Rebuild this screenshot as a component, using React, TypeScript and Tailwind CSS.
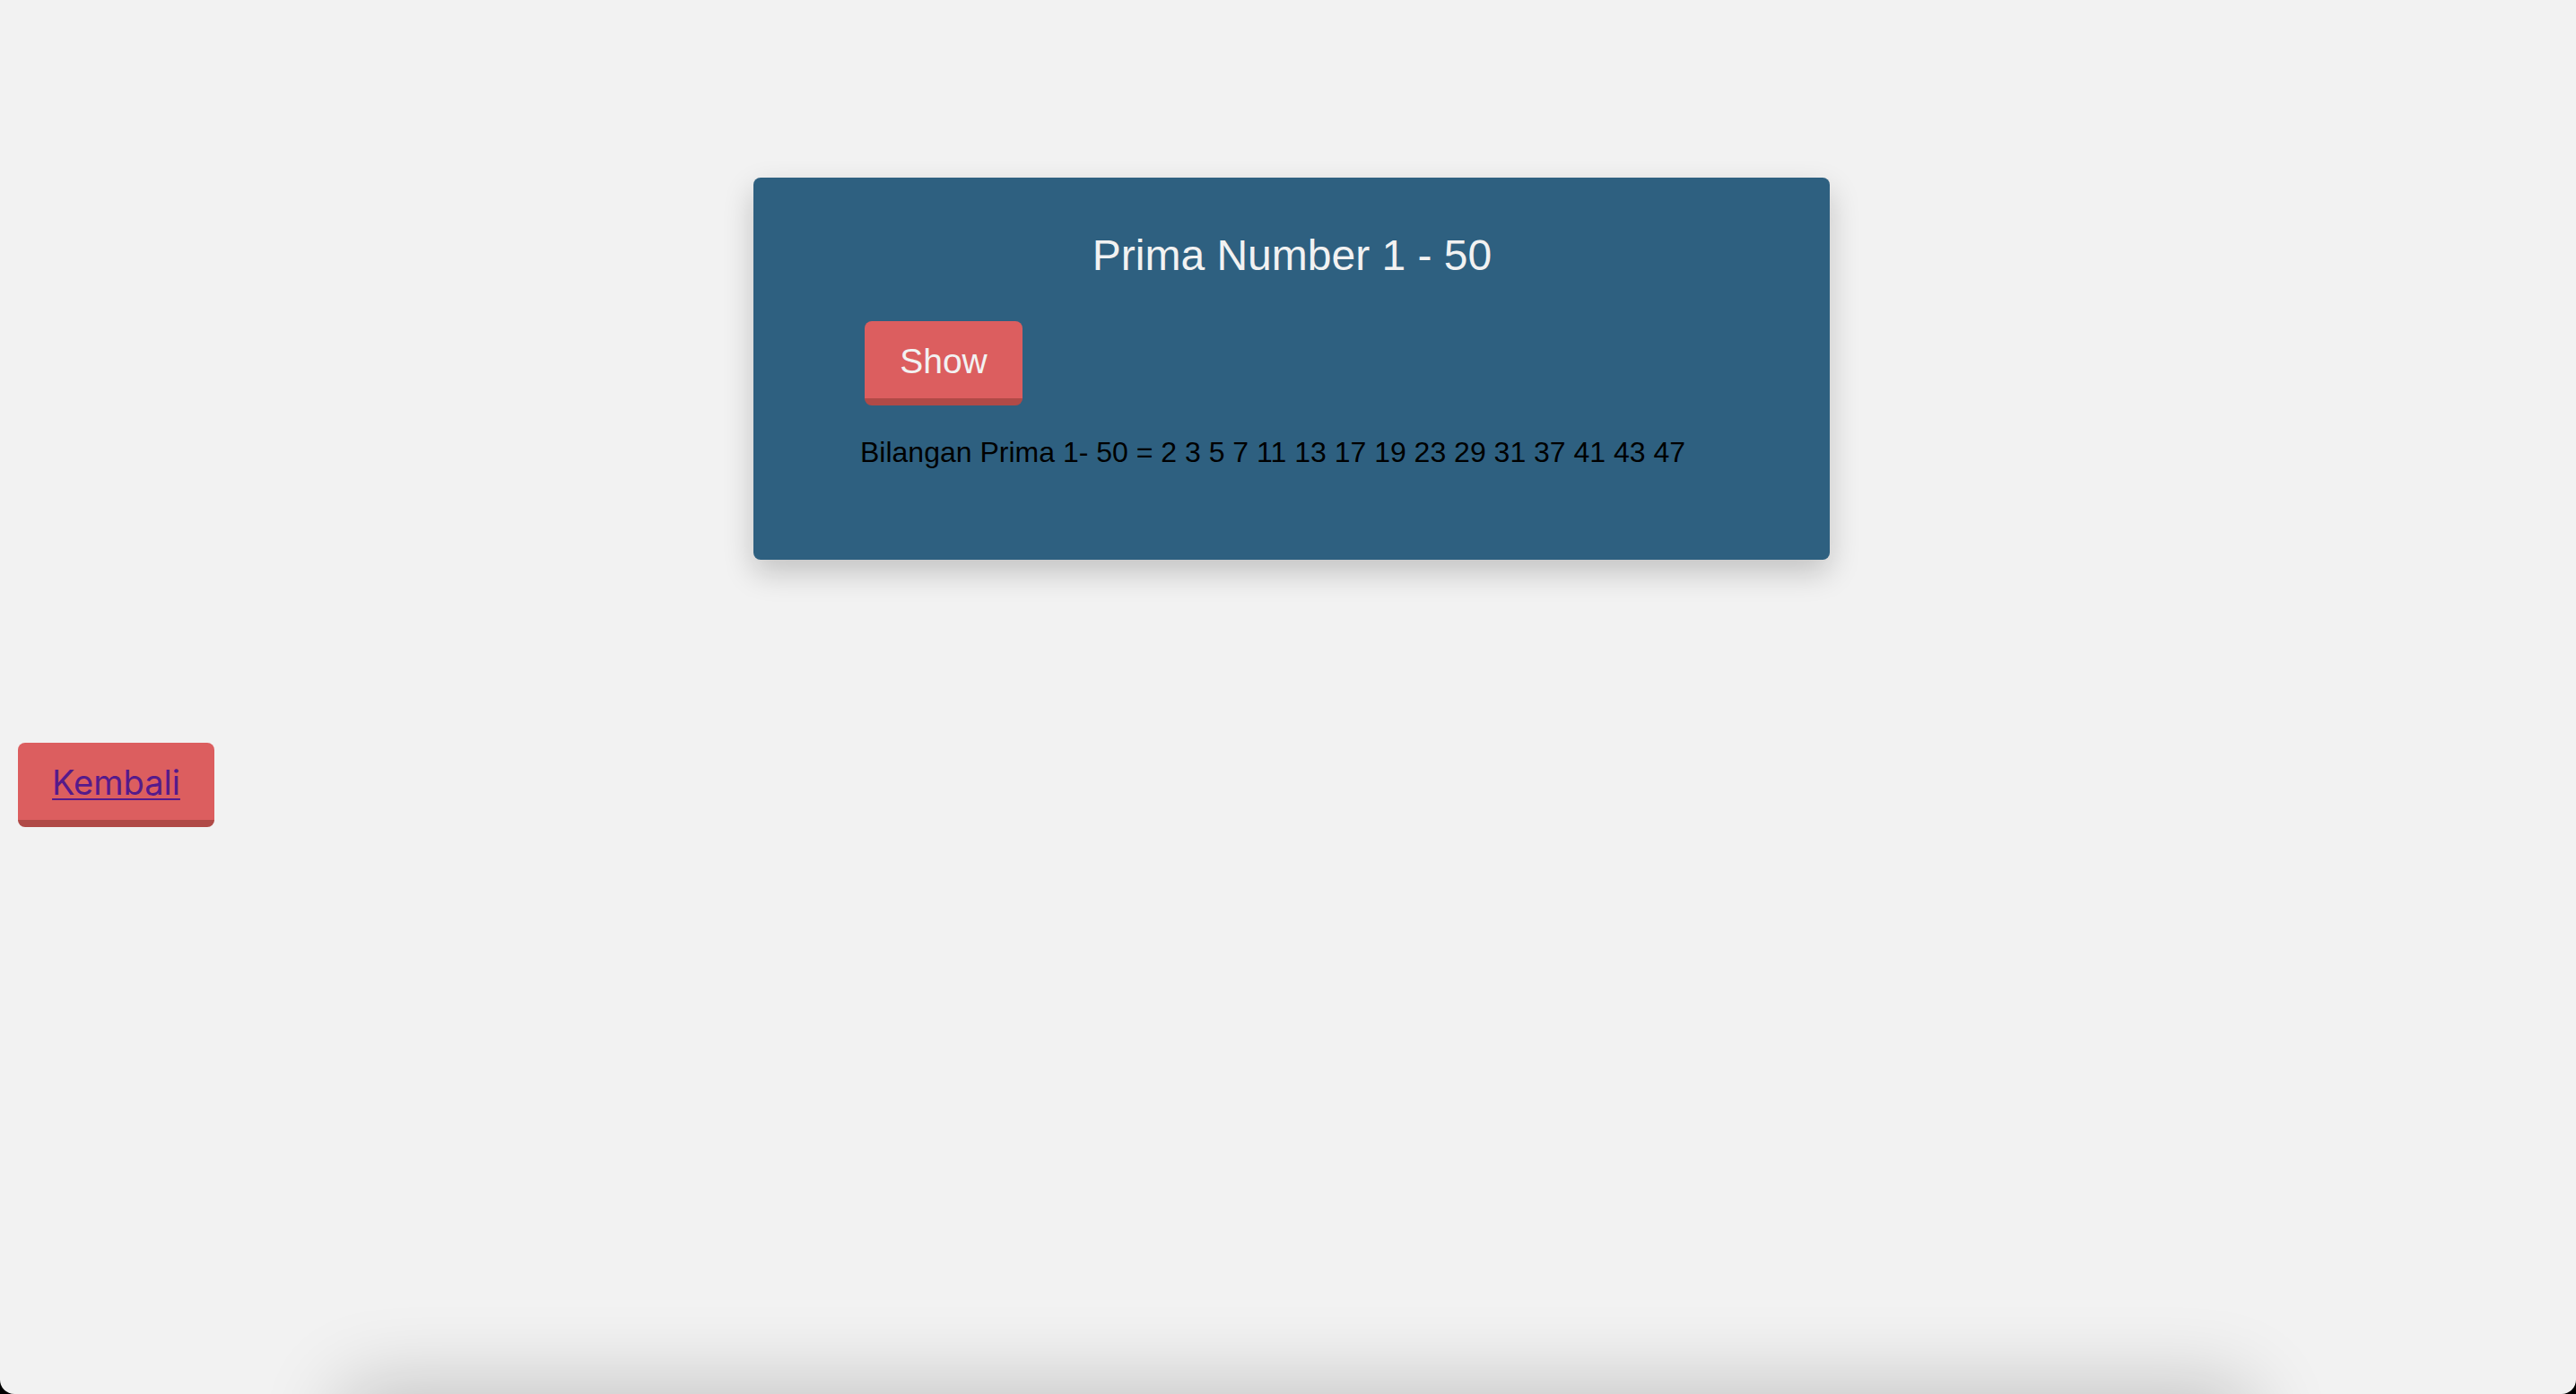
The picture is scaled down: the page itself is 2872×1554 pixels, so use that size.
import React from "react";

export default function App() {
  return (
    <div className="bg-black w-[2872px] h-[1554px] overflow-hidden">
      <div
        className="relative w-[2872px] h-[1554px] bg-[#f2f2f2] rounded-b-[16px] overflow-hidden flex flex-col"
        style={{ fontFamily: '"Liberation Sans", Arial, Helvetica, sans-serif' }}
      >
        <div className="h-[198px] shrink-0" />
        <div className="flex pl-[840px] shrink-0">
          <div className="w-[1200px] h-[426px] bg-[#2e6080] rounded-[8px] shadow-[0_14px_34px_rgba(0,0,0,0.2)] flex flex-col pt-[60px]">
            <h2 className="text-center text-[48px] leading-[54px] text-[#f2f2f2] font-normal pl-[1px]">
              Prima Number 1 - 50
            </h2>
            <div className="pl-[124px] mt-[46px]">
              <button className="bg-[#dc5e5f] text-[#f2f2f2] text-[39px] leading-[42px] pt-[24px] pb-[20px] w-[176px] rounded-[8px] border-b-[8px] border-[#b04a47]">
                Show
              </button>
            </div>
            <p className="pl-[119px] mt-[34px] text-[32px] leading-[36px] text-black">
              Bilangan Prima 1- 50 = 2 3 5 7 11 13 17 19 23 29 31 37 41 43 47
            </p>
          </div>
        </div>
        <div className="h-[204px] shrink-0" />
        <div className="pl-[20px] shrink-0 flex">
          <button
            className="bg-[#dc5e5f] w-[219px] pt-[21px] pb-[19px] rounded-[8px] border-b-[8px] border-[#b04a47] text-[38px] leading-[46px]"
            style={{ fontFamily: 'Inter, "Noto Sans", sans-serif' }}
          >
            <a href="#" className="text-[#551a8b] underline underline-offset-[4px] decoration-[2px]">
              Kembali
            </a>
          </button>
        </div>
        <div className="flex-1" />
        <div className="shrink-0 h-0 flex pl-[400px]">
          <div className="w-[2090px] h-[200px] mt-[10px] bg-[#f2f2f2] rounded-[8px] shadow-[0_0_90px_20px_rgba(0,0,0,0.2)]" />
        </div>
      </div>
    </div>
  );
}
